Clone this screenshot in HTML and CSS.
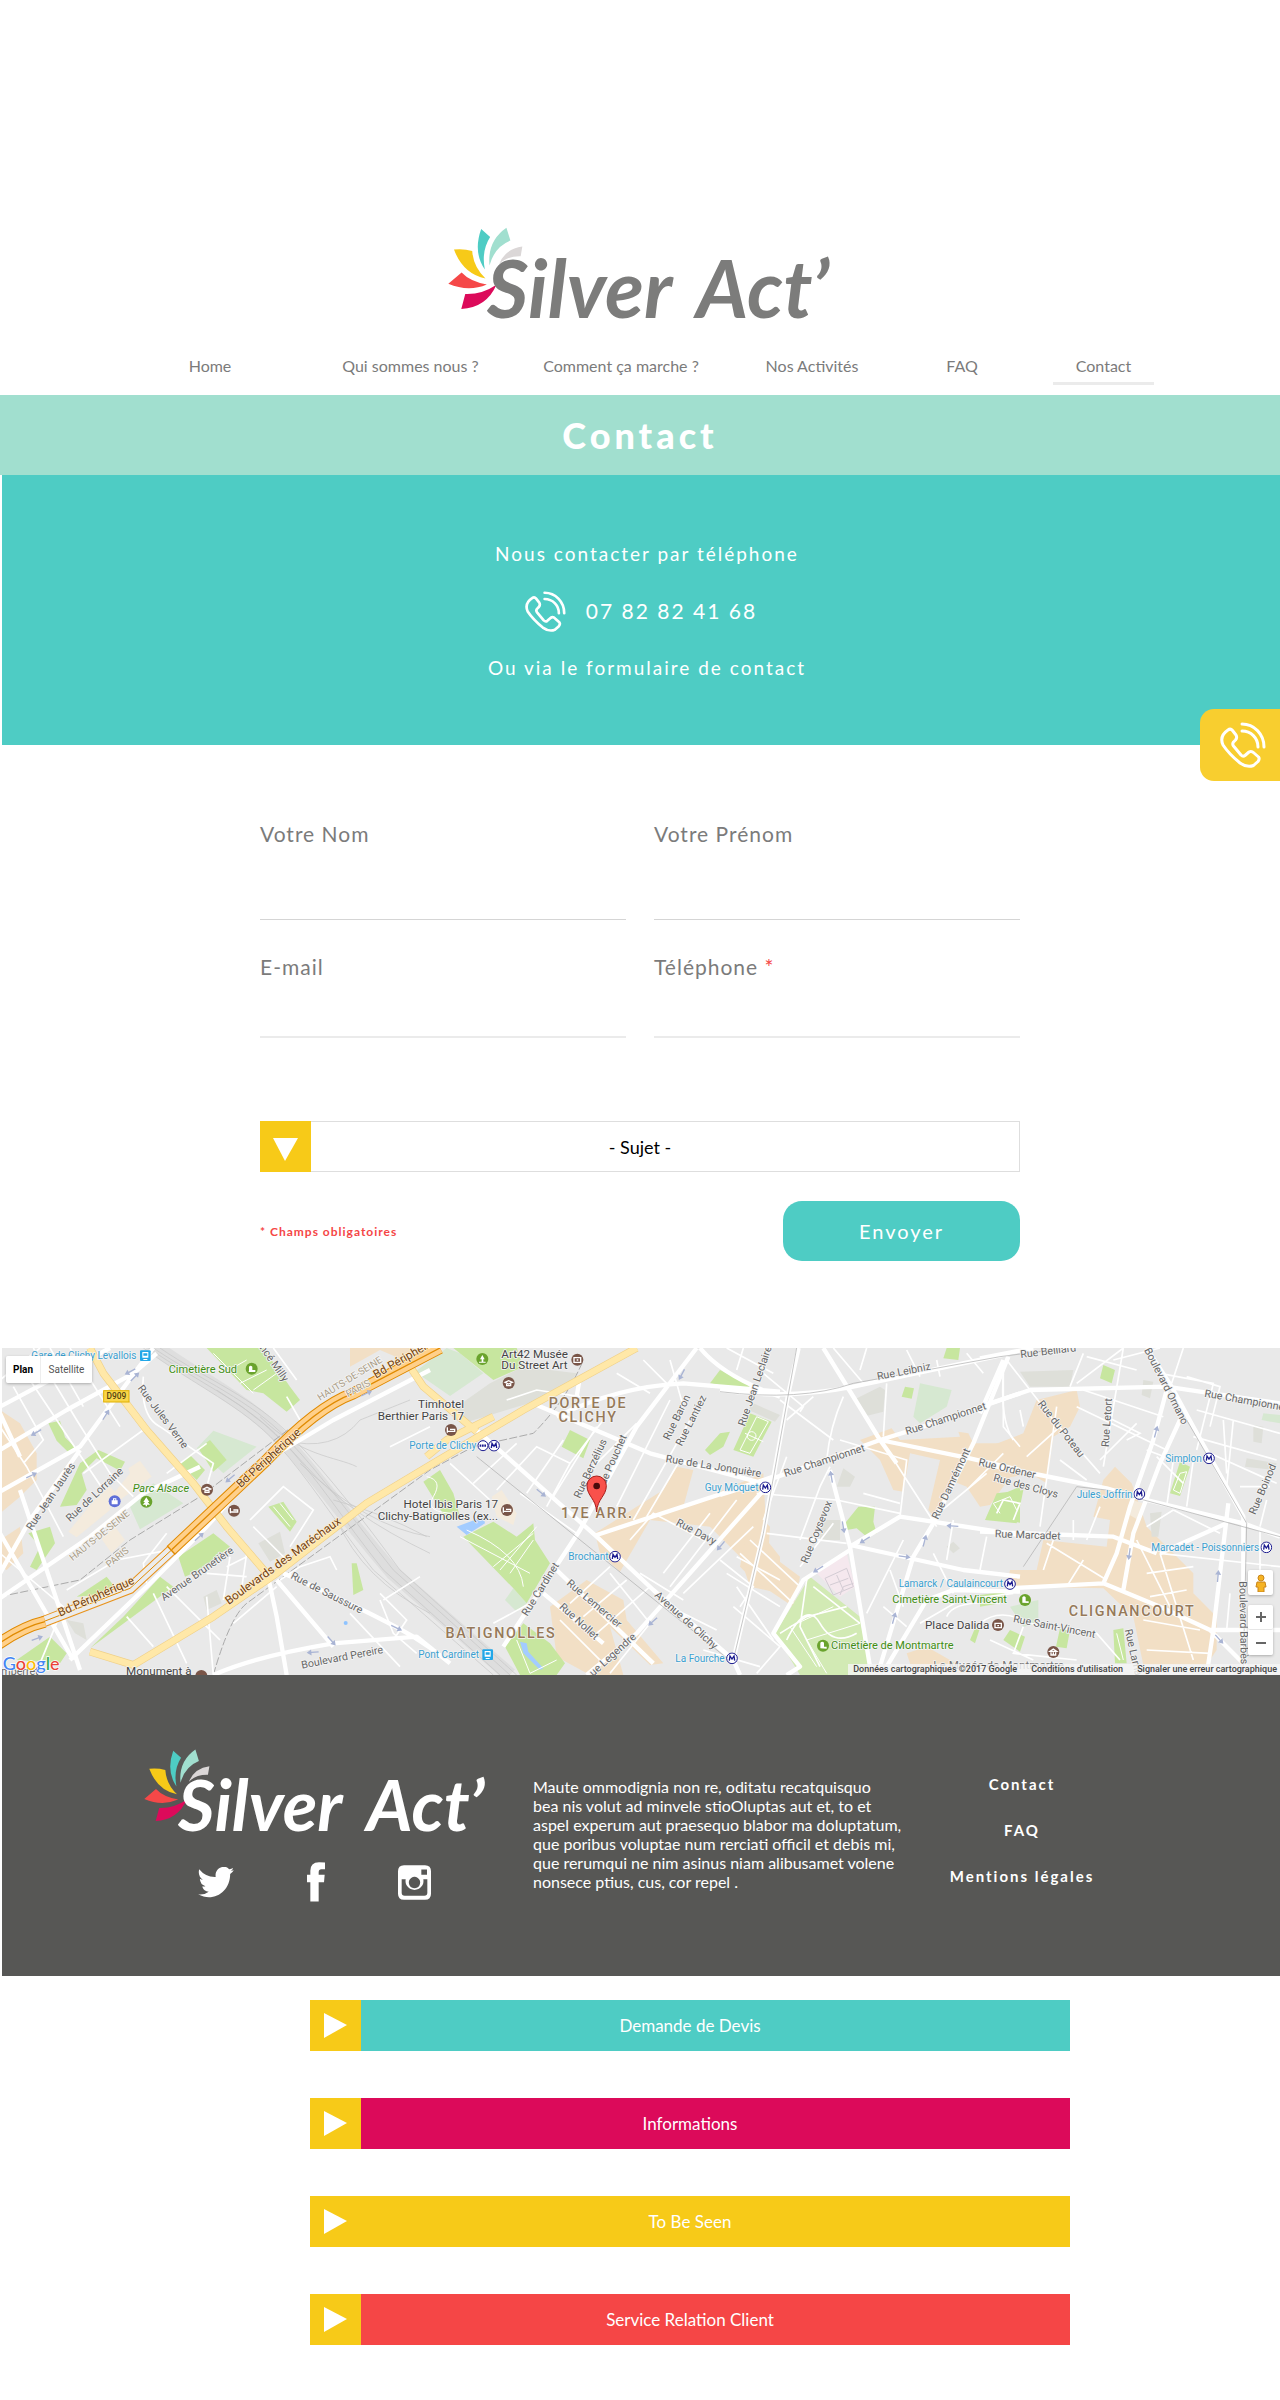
FILE: index.html
```html
<!DOCTYPE html>
<html lang="fr">
<head>
<meta charset="utf-8">
<meta name="viewport" content="width=device-width, initial-scale=1">
<title>Silver Act' - Contact</title>
<link rel="stylesheet" href="styles.css">
</head>
<body>
<svg class="defs" aria-hidden="true">
  <symbol id="petals" viewBox="88 52 226 250">
    <path fill="#4eccc4" d="M188 58L215 82Q188 124 199 180Q163 128 188 58Z"/>
    <path fill="#a1dfcf" d="M264 54L276 93Q228 112 213 168Q206 94 264 54Z"/>
    <path fill="#dbd7d7" d="M312 111L307 140Q265 139 242 164Q260 118 312 111Z"/>
    <path fill="#f7ca18" d="M106 120Q135 117 161 124Q164 172 201 207Q134 194 106 120Z"/>
    <path fill="#f54848" d="M89 223L129 189Q154 216 205 225Q150 249 89 223Z"/>
    <path fill="#dc0a5a" d="M128 299L140 254Q190 256 234 226Q204 295 128 299Z"/>
  </symbol>
  <symbol id="phone" viewBox="0 0 46 46">
    <g fill="none" stroke="#fff" stroke-width="3" stroke-linecap="round" stroke-linejoin="round">
      <path d="M8 8Q10.500 6 12.500 8.500L16 13Q17.500 15.500 15.500 18L13.500 20Q12 22 13.500 24L21 33Q23 35 25 33.500L29 30Q31.500 28.500 34 31L38.500 35Q40 37 38 39.500L33.500 43.500Q27 46 20 41Q9 32 3 23Q-1 14 8 8Z"/>
      <path d="M22 2C34 2 44 12 44 25M22 9C31 9 38 16 38 25"/>
    </g>
  </symbol>
  <symbol id="metro" viewBox="0 0 36 36">
    <circle cx="18" cy="18" r="16" fill="#fff" stroke="#1b1b8f" stroke-width="3"/>
    <path d="M10 25L12 11L18 20L24 11L26 25" fill="none" stroke="#1b1b8f" stroke-width="4"/>
  </symbol>
</svg>

<header class="header">
  <a class="brand" href="#"><svg aria-hidden="true"><use href="#petals"/></svg><span>Silver</span> <span>Act’</span></a>
  <nav class="nav">
    <a href="#">Home</a>
    <a href="#">Qui sommes nous ?</a>
    <a href="#">Comment ça marche ?</a>
    <a href="#">Nos Activités</a>
    <a href="#">FAQ</a>
    <a href="#" class="current" aria-current="page">Contact</a>
  </nav>
</header>

<main>
  <h1 class="title">Contact</h1>

  <section class="call">
    <p>Nous contacter par téléphone</p>
    <p class="number"><svg class="number-icon" aria-hidden="true"><use href="#phone"/></svg>07 82 82 41 68</p>
    <p>Ou via le formulaire de contact</p>
    <a class="call-tab" href="tel:0782824168" aria-label="Appeler"><svg><use href="#phone"/></svg></a>
  </section>

  <form class="form">
    <div class="fields">
      <div class="field tall"><label for="nom">Votre Nom</label><input id="nom" type="text"></div>
      <div class="field tall"><label for="prenom">Votre Prénom</label><input id="prenom" type="text"></div>
      <div class="field"><label for="mail">E-mail</label><input id="mail" type="email"></div>
      <div class="field"><label for="tel">Téléphone <span class="star">*</span></label><input id="tel" type="tel" required></div>
    </div>
    <div class="subject">
      <select aria-label="Sujet"><option>- Sujet -</option></select>
      <span class="subject-arrow"><svg viewBox="0 0 25 23"><path d="M0 0H25L12 23Z" fill="#fff"/></svg></span>
    </div>
    <div class="submit-row">
      <p class="required">* Champs obligatoires</p>
      <button class="send" type="submit">Envoyer</button>
    </div>
  </form>

  <section class="map" aria-label="Plan">
    <svg class="map-canvas" viewBox="6 24 3834 981" preserveAspectRatio="xMidYMid slice">
      <!-- districts, parks and buildings -->
      <g class="areas">
        <path class="tan" d="M0 210L60 250L110 340L110 420L60 470L0 520ZM0 600L60 560L70 640L20 690L0 680Z"/>
        <path class="green" d="M620 24L790 24L870 140L900 180L860 215L790 160L740 150ZM145 250L180 242L195 292L225 322L205 337L170 302ZM180 500L240 370L295 330L375 365L360 392L290 355L245 400L260 450L230 495ZM85 580L150 560L165 610L110 690L90 680L120 620ZM535 650L640 580L690 620L600 690L555 710ZM370 830L480 710L520 740L270 925ZM50 960L150 890L200 940L180 970ZM230 770L320 710L340 735L300 765ZM805 500L850 485L890 545L870 575ZM1055 670L1070 670L1090 750L1060 765ZM540 370L570 345L615 390L590 420Z"/>
        <path class="pale" d="M590 325L640 272L770 320L670 400ZM390 500L460 430L550 490L420 568Z"/>
        <path class="green" d="M595 325L630 300L680 360L640 395Z"/>
        <path class="building" d="M205 575L300 460L330 440L345 455L390 400L385 385L420 362L455 410L360 480L325 475L330 510L230 592ZM300 590L345 560L375 600L335 640Z"/>
        <path class="grey" d="M775 610L840 575L855 640L810 665ZM200 840L250 850L260 900L225 880ZM610 770L650 750L665 790L620 810Z"/>
      </g>
      <g class="areas" transform="translate(1050 0)">
        <path class="tan" d="M0 24L190 24L160 60L90 30L0 80ZM735 580L860 500L940 450L980 380L1030 390L1000 500L1240 400L1250 600L1290 650L1290 760L1200 740L1170 650L1080 560L900 540L810 695L750 640ZM600 800L710 720L820 780L830 840L940 970L900 975L780 860L820 1005L720 1005L620 950Z"/>
        <path class="pale" d="M195 95L290 24L330 40L400 100L300 168ZM465 780L490 745L530 790L500 815Z"/>
        <path class="grey" d="M420 130L520 80L680 100L640 160L470 210L340 250L320 200Z"/>
        <path class="green" d="M310 24L500 24L520 80L430 120ZM635 320L660 270L720 300L700 355ZM1065 330L1110 280L1140 275L1120 320L1080 345ZM1150 330L1200 220L1265 245L1210 350ZM1080 130L1110 90L1190 130L1210 155ZM220 425L270 390L310 460L330 530L290 540ZM340 590L430 545L500 590L550 550L555 600L600 670L530 790L490 745ZM465 920L520 850L600 910L645 970L620 1005L510 1005Z"/>
        <path class="water" d="M320 560L400 530L405 550L350 585ZM510 905L530 910L535 935L580 985L570 990L520 940Z"/>
        <path class="building" d="M425 470L455 450L500 520L490 555L440 530Z"/>
      </g>
      <g class="areas" transform="translate(2160 0)">
        <path class="tan" d="M420 300L515 265L540 300L720 290L715 275L745 280L760 310L900 310L900 370L810 495L780 500L740 440L690 420L650 540L625 510L660 360L570 340L550 455L520 450L480 360ZM110 420L130 540L150 560L145 640L240 710L220 800L100 720L60 680ZM560 940L620 920L760 1000L580 1000Z"/>
        <path class="cemetery" d="M165 880L270 710L420 830L450 1005L240 1005Z"/>
        <path class="pink" d="M280 690L380 640L405 740L360 770Z"/>
        <path class="green" d="M375 550L415 500L465 500L460 545L470 580L440 590L410 565L380 570ZM680 24L720 24L715 60L670 55ZM545 170L555 140L582 145L575 176ZM800 530L830 470L900 440L900 548ZM750 900L765 865L778 870L765 910Z"/>
        <path class="pale" d="M580 230L600 130L695 150L680 200L600 250Z"/>
        <path class="grey" d="M400 180L480 140L495 150L490 215L430 230ZM85 210L100 190L180 225L165 245ZM350 440L370 385L405 410L390 440ZM300 540L360 540L360 600L300 600ZM680 620L700 605L720 625L700 640Z"/>
      </g>
      <g class="areas" transform="translate(2940 0)">
        <path class="tan" d="M0 330L130 280L170 180L290 150L300 200L270 260L220 290L200 430L150 400L0 430ZM340 530L370 420L405 380L455 430L480 500L500 560L640 700L640 760L710 830L710 930L680 975L490 975L460 830L370 745L80 740L90 690L170 690L190 600L380 620L390 540Z"/>
        <path class="green" d="M15 540L50 460L130 450L110 550ZM360 115L370 75L405 90L395 130ZM570 460L600 365L630 380L600 468ZM70 900L90 870L135 890L120 935ZM228 920L240 865L270 870L260 925ZM400 870L430 865L440 970L405 970ZM0 765L75 755L60 790L0 800Z"/>
        <path class="pale" d="M90 800L175 780L175 850L130 860ZM850 220L900 225L900 250L845 240Z"/>
        <path class="building" d="M440 520L455 480L490 490L475 540Z"/>
        <path class="grey" d="M120 95L280 90L270 140L150 140ZM820 255L850 260L845 310L820 305ZM800 355L890 370L885 390L795 380ZM510 520L545 515L535 590L515 590ZM490 120L520 125L510 175L485 165Z"/>
      </g>

      <!-- railway tracks -->
      <g fill="none">
        <path stroke="#dedede" stroke-width="44" d="M450 10C600 120 740 180 850 300C960 420 1040 540 1180 700L1530 1005"/>
        <path class="track" d="M430 24C590 140 730 200 830 310S1000 540 1120 690L1480 1005M445 24C600 130 740 190 845 300S1030 540 1150 690L1500 1005M460 24C610 125 750 180 860 295S1060 540 1180 690L1530 1005M480 24C620 120 760 170 875 290S1090 540 1200 690L1550 1005M650 150Q800 240 920 380T1290 640M780 230C900 350 1010 350 1070 380M850 300Q1000 340 1080 240L1230 180M1000 480Q1150 520 1280 590M900 370Q1100 560 1290 590M1010 540Q1090 720 1290 820"/>
        <path class="dash" d="M0 770L240 720L390 600L600 470L870 265M640 1005Q690 830 740 790L1290 390L1420 320L1600 280Q1700 180 1750 60"/>
      </g>

      <!-- minor streets -->
      <g class="minor">
        <path d="M0 120L120 24M100 24L230 240L330 400L400 470M210 24L360 260M40 140L130 300L70 370M0 260L80 380L190 590M70 90L310 450M150 24L250 200M250 400L430 270M430 110Q420 230 480 260L640 370L620 440M500 400L620 310M440 730L430 670L500 580M200 750L350 660L560 620M680 680L740 650M620 700L740 710M670 780L690 650M720 780L740 640M460 760L560 970M380 830L460 920M500 740L660 900M620 770L640 1005M750 540L850 440L940 510L870 620M760 560L860 660M700 850L830 740M840 720L900 680L990 650L1010 690M890 120L820 24M900 240L860 170M0 640L190 800L120 970M1140 760L1220 840L1180 900M1150 780L1260 710M1170 320L1290 260"/>
        <path transform="translate(1050 0)" d="M470 180L560 150L690 170M440 450L560 320L660 370M370 430L500 310M300 370L420 480M530 460L640 300M510 460L680 580M590 500L660 370L760 240M700 410L860 250M610 470L740 260M800 500L960 180M850 540L1060 170M890 530L990 360M940 700L1080 520M960 740L1160 480M840 600L910 520L1060 600M1000 760L1210 560M960 800L1100 870M870 700L1000 780M780 700L900 850M660 790L780 680M700 830L830 720M740 880L900 740M630 840L760 970M780 1000L900 850M1130 700L1290 800M1160 650L1290 720M1160 740L1270 900M1060 930L1230 980M430 850L540 790M700 400L760 460M880 60L950 130M800 100L900 160M960 60L1000 200M0 820L150 980M90 780L130 880L200 940M1130 24L1270 100M1180 24L1160 90"/>
        <path transform="translate(2160 0)" d="M180 180L340 300M200 240L280 170M130 100L250 200L240 215M370 170Q330 260 320 360M490 290L500 130M360 300L560 360L540 530M490 310L560 420L650 560M140 580L380 610M110 460L350 480L540 520M240 600L300 440L330 380M130 540L200 350M240 680L340 550M430 460L540 490M440 820L550 600M510 690L550 800M680 660L700 540M780 690L800 590M630 540L800 400M740 450L850 340M650 60L660 110M850 90L850 260L900 320M790 100L740 40M180 880L260 830L380 800M260 720L240 860L300 980M200 900Q260 780 300 850T410 880M280 740L420 850M40 800L180 920L110 1000M60 640L220 790M90 600L240 740M0 660L100 740L60 800M640 640L700 760M490 800L560 860M600 850L720 780L880 760M680 830Q700 780 840 790M340 24L430 130M440 24L420 90M560 30L600 110"/>
        <path transform="translate(2940 0)" d="M80 60L220 240L360 400M290 130L430 24M270 140L310 40M400 60L540 24M320 50L470 90M430 24L370 380M140 350L240 260M180 560L230 200M240 360L320 420M120 210L130 260M70 100Q60 240 100 300M290 200L560 330M310 150L550 230M380 230L480 280L440 300M470 250L360 360M540 100L700 130L650 330M620 110L720 140L690 260M610 24L575 130M650 210L900 280M640 290L890 360M690 340L890 430M640 360L620 500M740 440L760 240M730 240L740 400M530 350L610 430M500 330L580 360L560 500M540 640L900 680M580 510L500 560M580 510L720 580M540 640L640 960M470 600L580 820M500 700L640 680M510 770L620 750M490 840L660 870M500 930L690 940M200 610L380 720M190 690L220 600M260 740L310 660M280 600L280 540M320 600L360 500M0 850Q60 800 150 850L350 880L420 960M130 860L100 940L290 960M30 900L160 960M50 520L70 480L120 490L100 540M750 760L740 870M780 440L870 440M860 480L840 560M840 570L840 700"/>
      </g>

      <!-- main streets -->
      <g class="streets">
        <path d="M0 200L330 24M0 330L200 210L400 100L470 40M0 455L240 320L410 90L460 24M0 700L90 540L240 330M0 775L270 590L430 460L600 380M0 580L220 960M60 450L240 990M210 960L440 740L620 560L800 360L1000 240L1290 90M800 690L830 830L860 1005M830 720L1000 920M850 700Q1100 810 1240 890L1300 930M640 1005Q760 950 1000 910L1250 890L1350 970M0 220L60 350"/>
        <path transform="translate(1050 0)" d="M380 270L740 590L910 750L1150 960M740 585L1270 410M1250 440L860 880L710 1005M460 920L690 570L860 260L1040 24M560 195L900 340L1240 430M1050 24Q1120 110 1290 170M620 230Q800 140 1000 130L1290 155M620 690L910 970M580 760L760 910M680 170L690 110"/>
        <path transform="translate(2160 0)" d="M0 150Q200 180 400 140L870 40M236 24L205 160L130 580L40 960L60 1005M310 24L480 300L530 370M0 465L160 415L480 300L640 250L900 160M480 300L750 355L900 390M865 50L760 310L640 550L580 650L480 980M330 390L390 620L450 980M390 620L540 530L900 585M390 615L730 690L900 710M390 630L250 720L160 880L240 980L200 1005M500 980L620 780L700 750L900 755"/>
        <path transform="translate(2940 0)" d="M70 60L0 220M0 200L150 150L560 140L660 155L900 190M0 55L160 24M500 24L575 140L640 260L790 530L790 975M560 150L520 300L450 500L410 640L370 730M600 240L540 370L460 580L430 750M0 370L180 405L380 445L500 480L790 550L900 590M0 575L400 590L530 640M80 745L370 730L540 800L690 870L900 870M745 490L700 870L680 1005M740 550L540 640M690 870L800 980"/>
      </g>
      <g fill="none" stroke="#aaa" stroke-width="2">
        <path d="M1430 350L2200 970M2390 24L2290 580L2200 960M2160 155Q2400 185 2560 130L3000 50L3200 24M3560 240L3740 550L3730 980M3070 680L3230 440L3320 450L3840 590"/>
      </g>

      <!-- boulevards and ring road -->
      <g class="yellow-edge"><path id="boulevards" d="M270 24L310 100L440 270L580 430L680 560L800 700M270 935L400 975L640 830L830 700L1100 490L1300 370L1570 210L1910 24M1210 50L1270 140L1430 275M1280 350L1340 300L1480 230"/></g>
      <g class="yellow"><path d="M270 24L310 100L440 270L580 430L680 560L800 700M270 935L400 975L640 830L830 700L1100 490L1300 370L1570 210L1910 24M1210 50L1270 140L1430 275M1280 350L1340 300L1480 230"/></g>
      <g fill="none">
        <path stroke="#e8931c" stroke-width="34" d="M130 845L390 745L520 625"/>
        <path stroke="#ececec" stroke-width="28" d="M130 845L390 745L520 625"/>
        <path stroke="#e08a00" stroke-width="3" d="M130 845L390 745L520 625"/>
        <path stroke="#e08a00" stroke-width="36" d="M-10 915Q70 860 135 845M512 632L800 360Q950 200 1060 160L1320 24"/>
        <path stroke="#ffd08a" stroke-width="30" d="M-10 915Q70 860 135 845M515 629L800 360Q950 200 1060 160L1320 24"/>
        <path stroke="#e08a00" stroke-width="4" d="M-10 915Q70 860 135 845M515 629L800 360Q950 200 1060 160L1320 24"/>
      </g>
      <g fill="none" stroke="#fff" stroke-width="3">
        <path d="M640 40L760 160M670 100L740 60M720 130L800 90M760 150L830 100M820 500L870 560M840 490L880 540M1280 410Q1330 420 1300 470T1370 520M1380 590L1590 700M1400 570Q1560 640 1570 740M1480 680L1600 580M1500 690L1610 560M1530 700L1600 600M1550 900L1590 1000L1670 960M2220 330L2270 230L2305 245L2250 340ZM2235 280L2290 305M2450 980L2370 860L2500 800M2580 850L2420 900L2480 1000M3000 520L2980 490L3030 470L3050 510M3520 450L3540 400L3560 395L3540 460ZM3350 880L3370 960"/>
        <circle cx="2255" cy="288" r="13"/>
      </g>
      <g fill="none" stroke="#d3ccd4" stroke-width="3"><path d="M2475 715L2540 685L2560 740L2500 765ZM2490 735L2545 715M2510 705L2530 750M2520 765L2530 740L2560 730"/></g>

      <!-- one-way arrows -->
      <g class="arrows">
        <path d="M-18 -2H4V-9L18 0L4 9V2H-18Z" transform="translate(390 95) rotate(152)"/>
        <path d="M-18 -2H4V-9L18 0L4 9V2H-18Z" transform="translate(405 110) rotate(-45)"/>
        <path d="M-18 -2H4V-9L18 0L4 9V2H-18Z" transform="translate(318 224) rotate(-58)"/>
        <path d="M-18 -2H4V-9L18 0L4 9V2H-18Z" transform="translate(108 278) rotate(150)"/>
        <path d="M-18 -2H4V-9L18 0L4 9V2H-18Z" transform="translate(95 406) rotate(-25)"/>
        <path d="M-18 -2H4V-9L18 0L4 9V2H-18Z" transform="translate(690 416) rotate(140)"/>
        <path d="M-18 -2H4V-9L18 0L4 9V2H-18Z" transform="translate(598 590) rotate(-42)"/>
        <path d="M-18 -2H4V-9L18 0L4 9V2H-18Z" transform="translate(112 895) rotate(-20)"/>
        <path d="M-18 -2H4V-9L18 0L4 9V2H-18Z" transform="translate(995 903) rotate(48)"/>
        <path d="M-18 -2H4V-9L18 0L4 9V2H-18Z" transform="translate(1190 864) rotate(25)"/>
        <path d="M-18 -2H4V-9L18 0L4 9V2H-18Z" transform="translate(938 937) rotate(175)"/>
        <path d="M-18 -2H4V-9L18 0L4 9V2H-18Z" transform="translate(1100 160) rotate(-25)"/>
        <path d="M-18 -2H4V-9L18 0L4 9V2H-18Z" transform="translate(1624 459) rotate(40)"/>
        <path d="M-18 -2H4V-9L18 0L4 9V2H-18Z" transform="translate(2045 104) rotate(118)"/>
        <path d="M-18 -2H4V-9L18 0L4 9V2H-18Z" transform="translate(2162 618) rotate(130)"/>
        <path d="M-18 -2H4V-9L18 0L4 9V2H-18Z" transform="translate(1958 845) rotate(138)"/>
        <path d="M-18 -2H4V-9L18 0L4 9V2H-18Z" transform="translate(2494 410) rotate(-100)"/>
        <path d="M-18 -2H4V-9L18 0L4 9V2H-18Z" transform="translate(2530 562) rotate(80)"/>
        <path d="M-18 -2H4V-9L18 0L4 9V2H-18Z" transform="translate(2594 600) rotate(148)"/>
        <path d="M-18 -2H4V-9L18 0L4 9V2H-18Z" transform="translate(2454 688) rotate(148)"/>
        <path d="M-18 -2H4V-9L18 0L4 9V2H-18Z" transform="translate(2714 650) rotate(8)"/>
        <path d="M-18 -2H4V-9L18 0L4 9V2H-18Z" transform="translate(2774 602) rotate(-75)"/>
        <path d="M-18 -2H4V-9L18 0L4 9V2H-18Z" transform="translate(2682 834) rotate(-75)"/>
        <path d="M-18 -2H4V-9L18 0L4 9V2H-18Z" transform="translate(2857 558) rotate(184)"/>
        <path d="M-18 -2H4V-9L18 0L4 9V2H-18Z" transform="translate(3468 275) rotate(-75)"/>
        <path d="M-18 -2H4V-9L18 0L4 9V2H-18Z" transform="translate(3388 642) rotate(98)"/>
        <path d="M-18 -2H4V-9L18 0L4 9V2H-18Z" transform="translate(3654 708) rotate(-85)"/>
        <path d="M-18 -2H4V-9L18 0L4 9V2H-18Z" transform="translate(3658 898) rotate(48)"/>
      </g>

      <!-- names -->
      <g class="names">
        <text class="blue" x="94" y="57">Gare de Clichy Levallois</text>
        <text class="park" x="506" y="98">Cimetière Sud</text>
        <text class="park italic" x="398" y="456">Parc Alsace</text>
        <text transform="translate(778 24) rotate(55)">ncé Milly</text>
        <text transform="translate(412 145) rotate(53)">Rue Jules Verne</text>
        <text transform="translate(95 573) rotate(-56)">Rue Jean Jaurès</text>
        <text transform="translate(210 547) rotate(-43)">Rue de Lorraine</text>
        <text class="region" transform="translate(218 664) rotate(-39)">HAUTS-DE-SEINE</text>
        <text class="region" transform="translate(328 684) rotate(-39)">PARIS</text>
        <text class="region" transform="translate(960 183) rotate(-32)">HAUTS-DE-SEINE</text>
        <text class="region" transform="translate(1044 172) rotate(-28)">PARIS</text>
        <text class="ring" transform="translate(180 830) rotate(-24)">Bd Périphérique</text>
        <text class="ring" transform="translate(722 445) rotate(-42)">Bd Périphérique</text>
        <text class="ring" transform="translate(1128 116) rotate(-30)">Bd Périphérique</text>
        <text class="ring" transform="translate(686 795) rotate(-36)">Boulevards des Maréchaux</text>
        <text transform="translate(492 784) rotate(-35)">Avenue Brunetière</text>
        <text transform="translate(870 714) rotate(27)">Rue de Saussure</text>
        <text transform="translate(906 986) rotate(-11)">Boulevard Pereire</text>
        <text class="place" x="378" y="1004">Monument à</text>
        <text x="4" y="1006">mperret</text>
      </g>
      <g class="names" transform="translate(1050 0)">
        <text class="place" x="454" y="53">Art42 Musée</text>
        <text class="place" x="454" y="88">Du Street Art</text>
        <text class="place" x="342" y="204" text-anchor="end">Timhotel</text>
        <text class="place" x="342" y="239" text-anchor="end">Berthier Paris 17</text>
        <text class="blue" x="178" y="328">Porte de Clichy</text>
        <text class="place" x="444" y="504" text-anchor="end">Hotel Ibis Paris 17</text>
        <text class="place" x="444" y="539" text-anchor="end">Clichy-Batignolles (ex...</text>
        <text class="area" x="714" y="203" text-anchor="middle">PORTE DE</text>
        <text class="area" x="714" y="247" text-anchor="middle">CLICHY</text>
        <text class="area" x="742" y="534" text-anchor="middle">17E ARR.</text>
        <text class="area" x="453" y="893" text-anchor="middle">BATIGNOLLES</text>
        <text transform="translate(690 477) rotate(-65)">Rue Berzélius</text>
        <text transform="translate(766 436) rotate(-66)">ue Pouchet</text>
        <text transform="translate(958 302) rotate(-64)">Rue Baron</text>
        <text transform="translate(995 320) rotate(-63)">Rue Lantiez</text>
        <text transform="translate(1184 260) rotate(-71)">Rue Jean Leclaire</text>
        <text transform="translate(946 366) rotate(9)">Rue de La Jonquière</text>
        <text class="blue" x="1064" y="452">Guy Môquet</text>
        <text transform="translate(976 554) rotate(28)">Rue Davy</text>
        <text class="blue" x="655" y="660">Brochant</text>
        <text transform="translate(532 830) rotate(-58)">Rue Cardinet</text>
        <text transform="translate(648 733) rotate(40)">Rue Lemercier</text>
        <text transform="translate(626 803) rotate(42)">Rue Nollet</text>
        <text transform="translate(912 768) rotate(42)">Avenue de Clichy</text>
        <text transform="translate(730 1010) rotate(-42)">ue Legendre</text>
        <text class="blue" x="205" y="955">Pont Cardinet</text>
        <text class="blue" x="976" y="966">La Fourche</text>
      </g>
      <g class="names" transform="translate(2160 0)">
        <text transform="translate(473 120) rotate(-11)">Rue Leibniz</text>
        <text transform="translate(196 411) rotate(-18)">Rue Championnet</text>
        <text transform="translate(560 285) rotate(-18)">Rue Championnet</text>
        <text transform="translate(654 540) rotate(-65)">Rue Damrémont</text>
        <text transform="translate(262 672) rotate(-68)">Rue Coysevox</text>
        <text class="blue" x="536" y="742">Lamarck / Caulaincourt</text>
        <text class="park" x="517" y="789">Cimetière Saint-Vincent</text>
        <text class="place" x="615" y="866">Place Dalida</text>
        <text class="park" x="333" y="927">Cimetière de Montmartre</text>
        <text class="place faded" x="640" y="988">Le Musée de Montmartre</text>
      </g>
      <g class="names" transform="translate(2940 0)">
        <text transform="translate(122 54) rotate(-7)">Rue Belliard</text>
        <text transform="translate(172 192) rotate(52)">Rue du Poteau</text>
        <text transform="translate(386 322) rotate(-86)">Rue Letort</text>
        <text transform="translate(492 30) rotate(63)">Boulevard Ornano</text>
        <text transform="translate(672 170) rotate(10)">Rue Championnet</text>
        <text class="blue" x="556" y="366">Simplon</text>
        <text transform="translate(826 526) rotate(-67)">Rue Boinod</text>
        <text transform="translate(-6 376) rotate(13)">Rue Ordener</text>
        <text transform="translate(38 422) rotate(15)">Rue des Cloys</text>
        <text class="blue" x="290" y="473">Jules Joffrin</text>
        <text transform="translate(44 592) rotate(2)">Rue Marcadet</text>
        <text class="blue" x="514" y="633">Marcadet - Poissonniers</text>
        <text class="area" x="456" y="827" text-anchor="middle">CLIGNANCOURT</text>
        <text transform="translate(98 846) rotate(11)">Rue Saint-Vincent</text>
        <text transform="translate(434 870) rotate(77)">Rue Lamarck</text>
        <text transform="translate(778 724) rotate(89)">Boulevard Barbès</text>
      </g>

      <!-- stations and points of interest -->
      <rect x="311" y="152" width="76" height="34" fill="#f9d64a" stroke="#e0b000" stroke-width="3"/>
      <text x="349" y="178" class="shield" text-anchor="middle">D909</text>
      <g>
        <circle cx="1449" cy="317" r="15" fill="#fff" stroke="#1b1b8f" stroke-width="3"/><path d="M1439 317H1459" stroke="#1b1b8f" stroke-width="7" stroke-dasharray="5 2"/>
        <use href="#metro" x="1464" y="299" width="36" height="36"/>
        <use href="#metro" x="1827" y="632" width="36" height="36"/><use href="#metro" x="2278" y="424" width="36" height="36"/>
        <use href="#metro" x="2178" y="937" width="36" height="36"/><use href="#metro" x="3012" y="714" width="36" height="36"/>
        <use href="#metro" x="3400" y="444" width="36" height="36"/><use href="#metro" x="3609" y="337" width="36" height="36"/>
        <use href="#metro" x="3781" y="604" width="36" height="36"/>
      </g>
      <g fill="#22a7e8">
        <rect x="420" y="31" width="32" height="32" rx="3"/><rect x="1447" y="928" width="32" height="32" rx="3"/>
        <path fill="#fff" d="M427 36H445V53H427ZM430 57H442V60H430ZM1454 933H1472V950H1454ZM1457 954H1469V957H1457Z"/>
        <path d="M430 40H442V47H430ZM1457 937H1469V944H1457Z"/>
      </g>
      <g fill="#6aa32d">
        <circle cx="755" cy="86" r="18"/><circle cx="439" cy="485" r="18"/><circle cx="1447" cy="57" r="18"/><circle cx="2469" cy="917" r="18"/><circle cx="3075" cy="780" r="18"/>
        <path fill="#fff" d="M747 94V80Q752 74 757 80V90H766V96H745ZM439 472L448 486H443L450 494H441V499H437V494H428L435 486H430ZM1447 45L1454 58H1450V65H1457V68H1437V65H1445V58H1440ZM2461 925V908Q2467 902 2472 908V920H2480V926ZM3067 788V772Q3072 766 3077 772V784H3086V789Z"/>
      </g>
      <g fill="#795548">
        <circle cx="621" cy="449" r="18"/><circle cx="702" cy="512" r="18"/><circle cx="604" cy="1008" r="18"/><circle cx="1353" cy="270" r="18"/><circle cx="1526" cy="129" r="18"/><circle cx="1732" cy="59" r="18"/><circle cx="1521" cy="510" r="18"/><circle cx="2994" cy="855" r="18"/><circle cx="3160" cy="936" r="18"/>
        <g fill="none" stroke="#fff" stroke-width="4">
          <path d="M691 504V520M691 516H713V510H700M1342 262V278M1342 274H1364V268H1350M1510 502V518M1510 514H1532V508H1518M610 447L621 442L632 447L621 452ZM615 452V457H627V452M1515 127L1526 122L1537 127L1526 132ZM1520 132V137H1532V132M1722 53H1742V67H1722ZM1730 60H1735M2985 850H3004V863H2985ZM2992 857H2997M3150 934L3160 927L3170 934ZM3153 937V945H3167V937M3160 937V945"/>
        </g>
      </g>
      <circle cx="344" cy="484" r="18" fill="#5f6fd8"/><path fill="#fff" d="M335 481H353V493H335ZM339 481V475H349V481H346V478H342V481Z"/>
      <circle cx="1037" cy="849" r="6" fill="#8ec3ff"/>
      <path d="M1790 516C1788 476 1761 468 1761 437A29 29 0 0 1 1819 437C1819 468 1792 476 1790 516Z" fill="#f9514b" stroke="#a51f1b" stroke-width="3"/>
      <circle cx="1790" cy="438" r="10" fill="#4a0b0b"/>
      <text x="8" y="990" class="google"><tspan fill="#4285f4">G</tspan><tspan fill="#ea4335">o</tspan><tspan fill="#fbbc05">o</tspan><tspan fill="#4285f4">g</tspan><tspan fill="#34a853">l</tspan><tspan fill="#ea4335">e</tspan></text>
    </svg>
    <div class="map-type"><button type="button" class="active">Plan</button><button type="button">Satellite</button></div>
    <div class="map-tools">
      <button type="button" class="pegman" aria-label="Street View"><svg viewBox="0 0 12 18"><circle cx="6" cy="4" r="3" fill="#f5b324" stroke="#c9851a"/><path d="M2 8H10L11 13H9V18H3V13H1Z" fill="#f5b324" stroke="#c9851a"/></svg></button>
      <div class="map-zoom">
        <button type="button" aria-label="Zoom avant"><svg viewBox="0 0 10 10"><path d="M0 5H10M5 0V10" stroke="#666" stroke-width="2"/></svg></button>
        <button type="button" aria-label="Zoom arrière"><svg viewBox="0 0 10 10"><path d="M0 5H10" stroke="#666" stroke-width="2"/></svg></button>
      </div>
    </div>
    <div class="map-credits"><span>Données cartographiques ©2017 Google</span><a href="#">Conditions d'utilisation</a><a href="#">Signaler une erreur cartographique</a></div>
  </section>
</main>

<footer class="footer">
  <div class="footer-brand">
    <a class="brand small" href="#"><svg aria-hidden="true"><use href="#petals"/></svg><span>Silver</span> <span>Act’</span></a>
    <div class="social">
      <a href="#" aria-label="Twitter"><svg width="36" height="31" viewBox="0 0 108 94"><path fill="#fff" d="M3 7Q22 31 53 30C49 3 80-10 94 7Q101 5 106 3Q104 9 99 12L108 10Q104 17 97 21C97 76 46 108 0 83Q20 85 32 75Q17 73 12 59Q18 60 22 58Q6 54 5 36Q10 39 14 39Q-2 27 3 7Z"/></svg></a>
      <a href="#" aria-label="Facebook"><svg width="18" height="40" viewBox="0 0 54 119"><path fill="#fff" d="M54 1V21H43Q35 21 35 30V38H53L51 60H35V118H10V60H0V38H10V26Q10 0 36 0Z"/></svg></a>
      <a href="#" aria-label="Instagram"><svg width="33" height="35" viewBox="0 0 99 104"><path fill="#fff" fill-rule="evenodd" d="M18 0H81Q99 0 99 18V86Q99 104 81 104H18Q0 104 0 86V18Q0 0 18 0ZM70 13V29H87V13ZM11 42V83Q11 92 20 92H79Q88 92 88 83V42H76A27 27 0 1 1 23 42ZM49 35A17 17 0 1 0 50 35Z"/></svg></a>
    </div>
  </div>
  <p class="footer-text">Maute ommodignia non re, oditatu recatquisquo<br>bea nis volut ad minvele stioOluptas aut et, to et<br>aspel experum aut praesequo blabor ma doluptatum,<br>que poribus voluptae num rerciati officil et debis mi,<br>que rerumqui ne nim asinus niam alibusamet volene<br>nonsece ptius, cus, cor repel .</p>
  <nav class="footer-links"><a href="#">Contact</a><a href="#">FAQ</a><a href="#">Mentions légales</a></nav>
</footer>

<section class="topics">
  <a href="#" class="topic teal"><span class="topic-arrow"><svg viewBox="0 0 23 25"><path d="M0 0L23 12L0 25Z" fill="#fff"/></svg></span><span>Demande de Devis</span></a>
  <a href="#" class="topic magenta"><span class="topic-arrow"><svg viewBox="0 0 23 25"><path d="M0 0L23 12L0 25Z" fill="#fff"/></svg></span><span>Informations</span></a>
  <a href="#" class="topic gold"><span class="topic-arrow"><svg viewBox="0 0 23 25"><path d="M0 0L23 12L0 25Z" fill="#fff"/></svg></span><span>To Be Seen</span></a>
  <a href="#" class="topic red"><span class="topic-arrow"><svg viewBox="0 0 23 25"><path d="M0 0L23 12L0 25Z" fill="#fff"/></svg></span><span>Service Relation Client</span></a>
</section>
</body>
</html>
```

FILE: styles.css
```css
* { box-sizing: border-box; }
body { margin: 0; background: #fff; color: #7b7b7b; font-family: Lato, "Liberation Sans", sans-serif; font-size: 16px; }
p, h1 { margin: 0; }
a { color: inherit; text-decoration: none; }
button, input, select { font: inherit; margin: 0; }
svg { display: block; }
.defs { position: absolute; width: 0; height: 0; }

/* logo */
.brand { display: flex; gap: 24px; width: 384px; margin: 0 auto; color: #7c7c7b; font-size: 80px; font-style: italic; font-weight: 700; line-height: 96px; white-space: nowrap; }
.brand svg { flex: none; width: 75px; height: 83px; margin-right: -60px; }
.brand span { padding-top: 12px; }
.brand.small { width: 342px; margin: 0; color: #fff; font-size: 71px; line-height: 85px; }
.brand.small svg { width: 66px; height: 73px; margin-right: -56px; }

/* header */
.header { padding-top: 227px; }
.nav { display: grid; grid-template-columns: 200fr 201fr 220fr 162fr 138fr 145fr; padding: 19px 104px 10px 110px; }
.nav a { justify-self: center; height: 31px; line-height: 24px; text-align: center; white-space: nowrap; }
.nav .current { width: 101px; border-bottom: 3px solid #ebebeb; }

/* banner */
.title { height: 80px; background: #a1dfcf; color: #fff; font-size: 36px; font-weight: 900; line-height: 80px; letter-spacing: 4px; text-align: center; }
.call { position: relative; display: flex; flex-direction: column; align-items: center; gap: 21px; margin-left: 2px; padding: 67px 0 65px; background: #4eccc4; color: #fff; font-size: 19px; line-height: 24px; letter-spacing: 2px; }
.call p { padding-left: 12px; }
.call .number { display: flex; align-items: center; gap: 20px; height: 48px; padding: 0; font-size: 21px; }
.number-icon { width: 41px; height: 41px; }
.call-tab { position: absolute; right: 0; bottom: -36px; display: flex; align-items: center; width: 80px; height: 72px; padding-left: 20px; border-radius: 14px 0 0 14px; background: #f8ce2f; }
.call-tab svg { width: 46px; height: 46px; }

/* contact form */
.form { width: 60%; min-width: 600px; max-width: 760px; margin: 0 auto; padding: 77px 0 87px; letter-spacing: 1px; }
.fields { display: grid; grid-template-columns: 1fr 1fr; gap: 35px 28px; }
.field { display: flex; flex-direction: column; font-size: 21px; line-height: 24px; }
.field input { height: 59px; padding: 0; border: 0; border-bottom: 2px solid #ebebeb; background: none; outline: 0; }
.field.tall input { height: 74px; border-bottom: 1px solid #d5d5d5; }
.star { color: #f54646; }
.subject { position: relative; margin-top: 83px; }
.subject select { display: block; width: 100%; height: 51px; padding: 0 51px; border: 1px solid #dedede; border-radius: 0; background: #fff; color: #000; font-size: 18px; letter-spacing: 0; text-align: center; text-align-last: center; appearance: none; }
.subject-arrow { position: absolute; left: 0; top: 0; display: flex; align-items: center; justify-content: center; width: 51px; height: 51px; padding-top: 6px; background: #f7ca18; pointer-events: none; }
.subject-arrow svg { width: 25px; height: 23px; }
.submit-row { display: flex; align-items: center; justify-content: space-between; margin-top: 29px; }
.required { color: #f54646; font-size: 12px; font-weight: 700; }
.send { width: 237px; height: 60px; border: 0; border-radius: 19px; background: #4eccc4; color: #fff; font-size: 20px; letter-spacing: 2px; }

/* map */
.map { position: relative; height: 327px; margin-left: 2px; overflow: hidden; background: #e9e9e9; font-family: Roboto, sans-serif; }
.map-canvas { width: 100%; height: 100%; }
.tan { fill: #f2dfc5; }
.green { fill: #c7e69f; }
.pale { fill: #d6e8d1; }
.cemetery { fill: #d2eab4; }
.grey { fill: #dedfd9; }
.water { fill: #a3ccff; }
.pink { fill: #f5e8ee; }
.building { fill: #f4ebdd; }
.track { stroke: #c6c6c6; stroke-width: 2; }
.dash { stroke: #aaa; stroke-width: 3; stroke-dasharray: 24 7; }
.minor { fill: none; stroke: #fff; stroke-width: 5; }
.streets { fill: none; stroke: #fff; stroke-width: 13; stroke-linejoin: round; }
.yellow-edge { fill: none; stroke: #f0d189; stroke-width: 23; stroke-linejoin: round; }
.yellow { fill: none; stroke: #ffe8a8; stroke-width: 19; stroke-linejoin: round; }
.arrows { fill: #a9b4d4; }
.names { fill: #666; font-size: 32px; paint-order: stroke; stroke: #f4f4f4; stroke-width: 5px; stroke-linejoin: round; }
.names .blue { fill: #3a9fd0; font-size: 30px; }
.names .park { fill: #3f8e12; font-size: 33px; }
.names .italic { font-style: italic; }
.names .region { fill: #a99c86; font-size: 29px; }
.names .ring { fill: #70400f; font-size: 35px; stroke: #ffeecf; }
.names .place { fill: #444; font-size: 35px; }
.names .faded { fill: #777; }
.names .area { fill: #967959; font-size: 43px; font-weight: 500; letter-spacing: 5px; }
.shield { fill: #504010; font-size: 25px; font-weight: 500; }
.google { font-family: Lato, sans-serif; font-size: 54px; font-weight: 500; paint-order: stroke; stroke: #fff; stroke-width: 4px; }
.map button { padding: 0; border: 0; background: #fff; color: #555; }
.map-type { position: absolute; left: 4px; top: 8px; display: flex; height: 27px; border-radius: 2px; box-shadow: 0 1px 3px #0004; overflow: hidden; }
.map-type button { width: 51px; font-size: 10px; }
.map-type .active { width: 35px; border-right: 1px solid #eee; color: #000; font-weight: 700; }
.map-tools { position: absolute; right: 7px; top: 222px; display: flex; flex-direction: column; gap: 10px; }
.map-tools button { display: flex; align-items: center; justify-content: center; width: 25px; height: 25px; border-radius: 2px; }
.map-tools svg { width: 10px; height: 10px; }
.map-tools .pegman { box-shadow: 0 1px 3px #0004; }
.map-tools .pegman svg { width: 12px; height: 18px; }
.map-zoom { border-radius: 2px; box-shadow: 0 1px 3px #0004; }
.map-zoom button:first-child { border-bottom: 1px solid #e6e6e6; }
.map-credits { position: absolute; right: 0; bottom: 0; display: flex; gap: 14px; height: 11px; padding: 0 3px 0 5px; background: #f5f5f5cc; color: #444; font-size: 9px; font-weight: 500; line-height: 10px; white-space: nowrap; }

/* footer */
.footer { display: flex; min-height: 301px; margin-left: 2px; padding: 74px 0 0 142px; background: #575755; color: #fff; }
.footer-brand { flex: none; width: 342px; margin-right: 47px; }
.social { display: flex; align-items: center; gap: 73px; height: 40px; margin-top: 16px; padding-left: 54px; }
.footer-text { flex: none; width: 376px; padding-top: 28px; line-height: 19px; white-space: nowrap; }
.footer-links { flex: 1; max-width: 226px; display: flex; flex-direction: column; align-items: center; gap: 26px; padding-top: 25px; font-size: 15px; font-weight: 700; line-height: 20px; letter-spacing: 2px; white-space: nowrap; }

/* topic shortcuts */
.topics { display: flex; flex-direction: column; align-items: center; gap: 47px; padding: 24px 0 54px 100px; }
.topic { display: grid; grid-template-columns: 51px 1fr 51px; align-items: center; width: 100%; max-width: 760px; height: 51px; color: #fff; font-size: 17px; text-align: center; }
.topic-arrow { display: flex; align-items: center; height: 51px; padding-left: 14px; background: #f7ca18; }
.topic-arrow svg { width: 23px; height: 25px; }
.teal { background: #4eccc4; }
.magenta { background: #dc0a5a; }
.gold { background: #f7ca18; }
.red { background: #f54646; }
```
